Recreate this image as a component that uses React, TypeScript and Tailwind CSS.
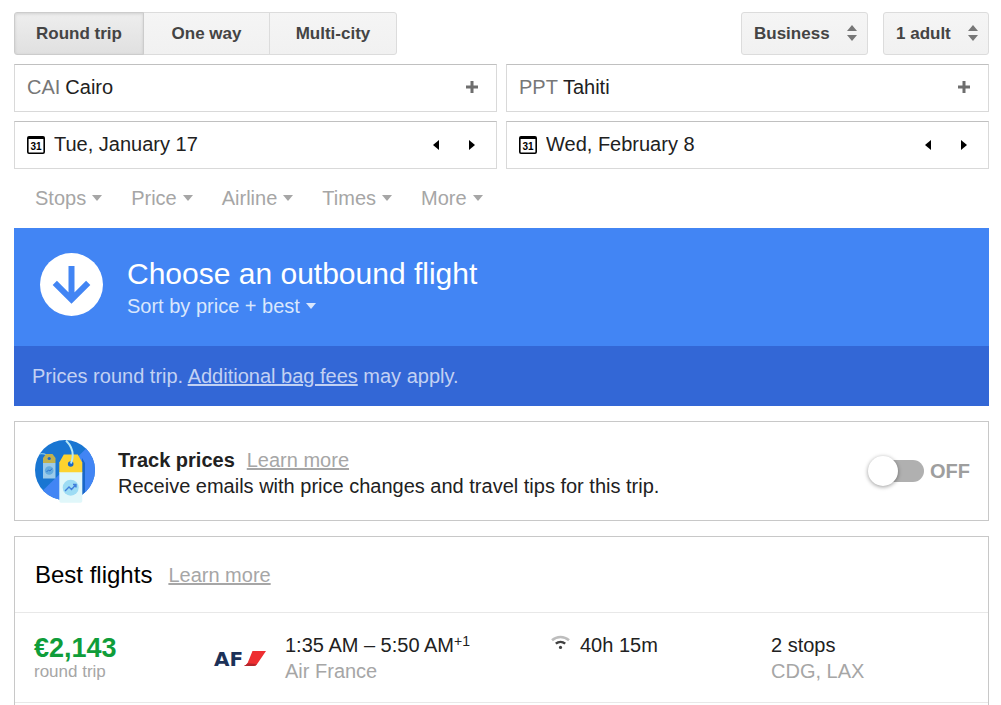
import { useState } from 'react';
import clsx from 'clsx';

const TRIP_TYPES = [
  { label: 'Round trip', width: 'w-[130px]' },
  { label: 'One way', width: 'w-[127px]' },
  { label: 'Multi-city', width: 'w-32' },
];

const FILTERS = ['Stops', 'Price', 'Airline', 'Times', 'More'];

export default function App() {
  const [tripType, setTripType] = useState('Round trip');
  const [tracking, setTracking] = useState(false);

  return (
    <div className="min-h-screen flex flex-col bg-white pt-3 pl-3.5 pr-3 text-[#212121] text-[20px] leading-[26px] font-['Liberation_Sans',Arial,sans-serif]">
      {/* Trip options */}
      <div className="flex justify-between">
        <div className="flex">
          {TRIP_TYPES.map((type) => (
            <button
              key={type.label}
              onClick={() => setTripType(type.label)}
              className={clsx(
                'h-[43px] -mr-px border text-[17px] font-bold text-[#444] first:rounded-l-[3px] last:mr-0 last:rounded-r-[3px]',
                type.width,
                tripType === type.label
                  ? 'relative border-[#ccc] bg-linear-to-b from-[#eee] to-[#e0e0e0] shadow-[inset_0_1px_3px_rgba(0,0,0,0.12)]'
                  : 'border-[#dcdcdc] bg-linear-to-b from-[#f5f5f5] to-[#f1f1f1]'
              )}
            >
              {type.label}
            </button>
          ))}
        </div>
        <div className="flex gap-[15px]">
          <OptionSelect label="Cabin class" options={['Business', 'Economy', 'First']} width="w-[127px]" />
          <OptionSelect label="Passengers" options={['1 adult', '2 adults']} width="w-[106px]" />
        </div>
      </div>

      {/* Route and dates */}
      <div className="mt-[9px] grid grid-cols-2 gap-[9px]">
        <PlaceField label="From" code="CAI" city="Cairo" />
        <PlaceField label="To" code="PPT" city="Tahiti" />
        <DateField label="Departure date" value="Tue, January 17" />
        <DateField label="Return date" value="Wed, February 8" />
      </div>

      <div className="mt-4 flex gap-[29px] pl-[21px] text-[#a6a6a6]">
        {FILTERS.map((filter) => (
          <button key={filter} className="flex items-center gap-1.5">
            {filter}
            <CaretDown />
          </button>
        ))}
      </div>

      {/* Outbound banner */}
      <section className="mt-[17px] bg-[#4285f4] text-white">
        <div className="flex h-[118px] items-start gap-6 pl-[26px] pt-[25px]">
          <svg width="63" height="63" viewBox="0 0 63 63" aria-hidden="true">
            <circle cx="31.5" cy="31.5" r="31.5" fill="#fff" />
            <path d="M31.5 13v34M14.8 29.8 31.5 46.5 48.2 29.8" fill="none" stroke="#4285f4" strokeWidth="6" />
          </svg>
          <div className="pt-0.5">
            <h1 className="text-[30px] leading-[38px]">Choose an outbound flight</h1>
            <button className="flex items-center gap-1.5 text-[#d9e7fd]">
              Sort by price + best
              <CaretDown />
            </button>
          </div>
        </div>
        <p className="flex h-[60px] items-center bg-[#3367d6] pl-[18px] text-[#c2d1f3]">
          <span>
            Prices round trip. <a href="#bag-fees" className="underline">Additional bag fees</a> may apply.
          </span>
        </p>
      </section>

      {/* Price tracking */}
      <section className="mt-[15px] flex h-[100px] items-center border border-[#c8c8c8] pl-5 pr-[18px]">
        <PriceTagsIcon />
        <div className="ml-[23px] flex-1 pt-1">
          <div className="flex gap-3">
            <h2 className="font-bold">Track prices</h2>
            <a href="#track-prices" className="text-[#a6a6a6] underline">Learn more</a>
          </div>
          <p>Receive emails with price changes and travel tips for this trip.</p>
        </div>
        <label className="flex items-center gap-1.5 font-bold text-[#9e9e9e]">
          <input
            type="checkbox"
            role="switch"
            aria-label="Track prices"
            checked={tracking}
            onChange={() => setTracking(!tracking)}
            className="flex h-[22px] w-[54px] appearance-none items-center rounded-full bg-[#b0b0b0] checked:justify-end checked:bg-[#4285f4] before:-mx-0.5 before:size-[30px] before:rounded-full before:bg-white before:shadow-[0_1px_4px_rgba(0,0,0,0.4)]"
          />
          {tracking ? 'ON' : 'OFF'}
        </label>
      </section>

      {/* Results */}
      <section className="mt-[15px] flex-1 border border-b-0 border-[#c8c8c8]">
        <div className="flex h-[75px] items-center gap-4 pl-5">
          <h2 className="text-[24px] text-black">Best flights</h2>
          <a href="#best-flights" className="text-[#a6a6a6] underline">Learn more</a>
        </div>
        <div className="grid h-[91px] grid-cols-[180px_71px_266px_1fr_217px] border-y border-[#e8e8e8] pl-[19px] pt-[19px]">
          <div>
            <p className="text-[27px] leading-[32px] font-bold text-[#0f9d3a]">€2,143</p>
            <p className="text-[17px] leading-4 text-[#a6a6a6]">round trip</p>
          </div>
          <AirFranceLogo />
          <div>
            <p>1:35 AM – 5:50 AM<sup className="top-[-6px] text-[14px]">+1</sup></p>
            <p className="text-[#a6a6a6]">Air France</p>
          </div>
          <div className="flex items-start gap-2.5">
            <WifiIcon />
            <p>40h 15m</p>
          </div>
          <div>
            <p>2 stops</p>
            <p className="text-[#a6a6a6]">CDG, LAX</p>
          </div>
        </div>
      </section>
    </div>
  );
}

function OptionSelect({ label, options, width }: { label: string; options: string[]; width: string }) {
  return (
    <div className={clsx('relative', width)}>
      <select
        aria-label={label}
        className="h-[43px] w-full appearance-none rounded-[3px] border border-[#dcdcdc] bg-linear-to-b from-[#f5f5f5] to-[#f1f1f1] pl-3 text-[17px] font-bold text-[#444]"
      >
        {options.map((option) => (
          <option key={option}>{option}</option>
        ))}
      </select>
      <svg className="pointer-events-none absolute right-[11px] top-[13px]" width="10" height="16" viewBox="0 0 10 16" fill="#777" aria-hidden="true">
        <path d="M5 0l5 6H0zM5 16l5-6H0z" />
      </svg>
    </div>
  );
}

function PlaceField({ label, code, city }: { label: string; code: string; city: string }) {
  return (
    <div className="flex h-12 items-center border border-[#d9d9d9] border-t-[#c0c0c0] pl-3 pr-[18px] pb-0.5">
      <label className="flex flex-1 items-center gap-[5px]">
        <span className="text-[#777]">{code}</span>
        <input aria-label={label} defaultValue={city} className="w-0 flex-1 outline-none" />
      </label>
      <button aria-label={`Add another airport to ${label}`}>
        <svg width="12" height="12" viewBox="0 0 12 12" aria-hidden="true">
          <path d="M6 0v12M0 6h12" stroke="#6e6e6e" strokeWidth="3" />
        </svg>
      </button>
    </div>
  );
}

function DateField({ label, value }: { label: string; value: string }) {
  return (
    <div className="flex h-12 items-center border border-[#d9d9d9] border-t-[#c0c0c0] pl-3 pr-[21px]">
      <CalendarIcon />
      <input aria-label={label} defaultValue={value} className="ml-[9px] h-[26px] w-0 flex-1 pb-0.5 outline-none" />
      <div className="flex gap-[30px]">
        <button aria-label="Previous day">
          <svg width="6" height="10" viewBox="0 0 6 10" aria-hidden="true">
            <path d="M6 0v10L0 5z" />
          </svg>
        </button>
        <button aria-label="Next day">
          <svg width="6" height="10" viewBox="0 0 6 10" aria-hidden="true">
            <path d="M0 0v10l6-5z" />
          </svg>
        </button>
      </div>
    </div>
  );
}

function CaretDown() {
  return (
    <svg width="10" height="6" viewBox="0 0 10 6" fill="currentColor" aria-hidden="true">
      <path d="M0 0h10L5 6z" />
    </svg>
  );
}

function CalendarIcon() {
  return (
    <svg width="18" height="18" viewBox="0 0 18 18" aria-hidden="true">
      <rect x="0.8" y="0.8" width="16.4" height="16.4" rx="1.2" fill="#fff" stroke="#000" strokeWidth="1.6" />
      <path d="M1 1h16v2H1z" />
      <text x="9" y="13.5" textAnchor="middle" fontSize="10" fontWeight="bold" fontFamily="Liberation Sans, sans-serif">31</text>
    </svg>
  );
}

function WifiIcon() {
  return (
    <svg className="mt-[3px]" width="19" height="15" viewBox="0 0 19 15" fill="none" aria-hidden="true">
      <path d="M1 5.2c5-4.3 12-4.3 17 0" stroke="#bdbdbd" strokeWidth="2.6" />
      <path d="M4.8 8.7c2.8-2.4 6.6-2.4 9.4 0" stroke="#424242" strokeWidth="2.4" />
      <circle cx="9.5" cy="12.4" r="1.6" fill="#424242" />
    </svg>
  );
}

function AirFranceLogo() {
  return (
    <svg className="mt-3.5 overflow-visible" width="52" height="26" viewBox="0 0 52 26" aria-label="Air France" role="img">
      <text x="0" y="20" fontSize="20" fontWeight="bold" fontFamily="DejaVu Sans, sans-serif" fill="#1c3158">AF</text>
      <path d="M38.500 5H52l-8.500 12.500Q42 20 39.500 20H30q2.500-1 3.500-2.800z" fill="#ee2e31" />
      <path d="M30 20q2.500-1 3.500-2.800l9.500 1Q42 20 39.500 20z" fill="#b3262c" />
    </svg>
  );
}

function PriceTagsIcon() {
  return (
    <svg width="60" height="63" viewBox="0 0 60 63" fill="none" aria-hidden="true">
      <clipPath id="disc">
        <circle cx="30" cy="30" r="30" />
      </clipPath>
      <g clipPath="url(#disc)">
        <path d="M0 0h60v60H0z" fill="#1976d2" />
        <path d="M60 0v60H0v-2z" fill="#4285f4" />
        <path d="M47 18l3 5v40h-3z" fill="#1967c8" />
        <path d="M2 14.500c5-1.500 10-.5 12 4" stroke="#7fc4e8" strokeWidth="1.200" />
      </g>
      {/* back tag */}
      <path d="M8 23v-5l3-4h6.500l3 4v5z" fill="#c0b14f" />
      <path d="M8 23h12.500v15.500H8z" fill="#9ccbe9" />
      <circle cx="14.200" cy="18.500" r="1.600" fill="#1967c8" />
      <circle cx="14.200" cy="30.500" r="4.300" fill="#64acdf" />
      <path d="M11.500 32l2-2 1.500 1 2-2.500" stroke="#2f73cf" />
      {/* front tag */}
      <path d="M24.300 33V22.500l4.500-8h14l4.500 8V33z" fill="#fdd32f" />
      <path d="M24.300 32.300h23V61q0 1.700-1.700 1.700H26q-1.700 0-1.700-1.700z" fill="#e0f7fa" />
      <circle cx="35.700" cy="24" r="2.800" fill="#1967c8" />
      <path d="M31 .5c5 5 9 13 5 23" stroke="#b8e9f5" strokeWidth="2" />
      <circle cx="35.700" cy="47.700" r="8" fill="#9ddcf4" />
      <path d="M30 51l4-4 2.500 2.500 4.500-5M38 44.500h3v3" stroke="#3f7fdc" strokeWidth="1.400" />
    </svg>
  );
}
